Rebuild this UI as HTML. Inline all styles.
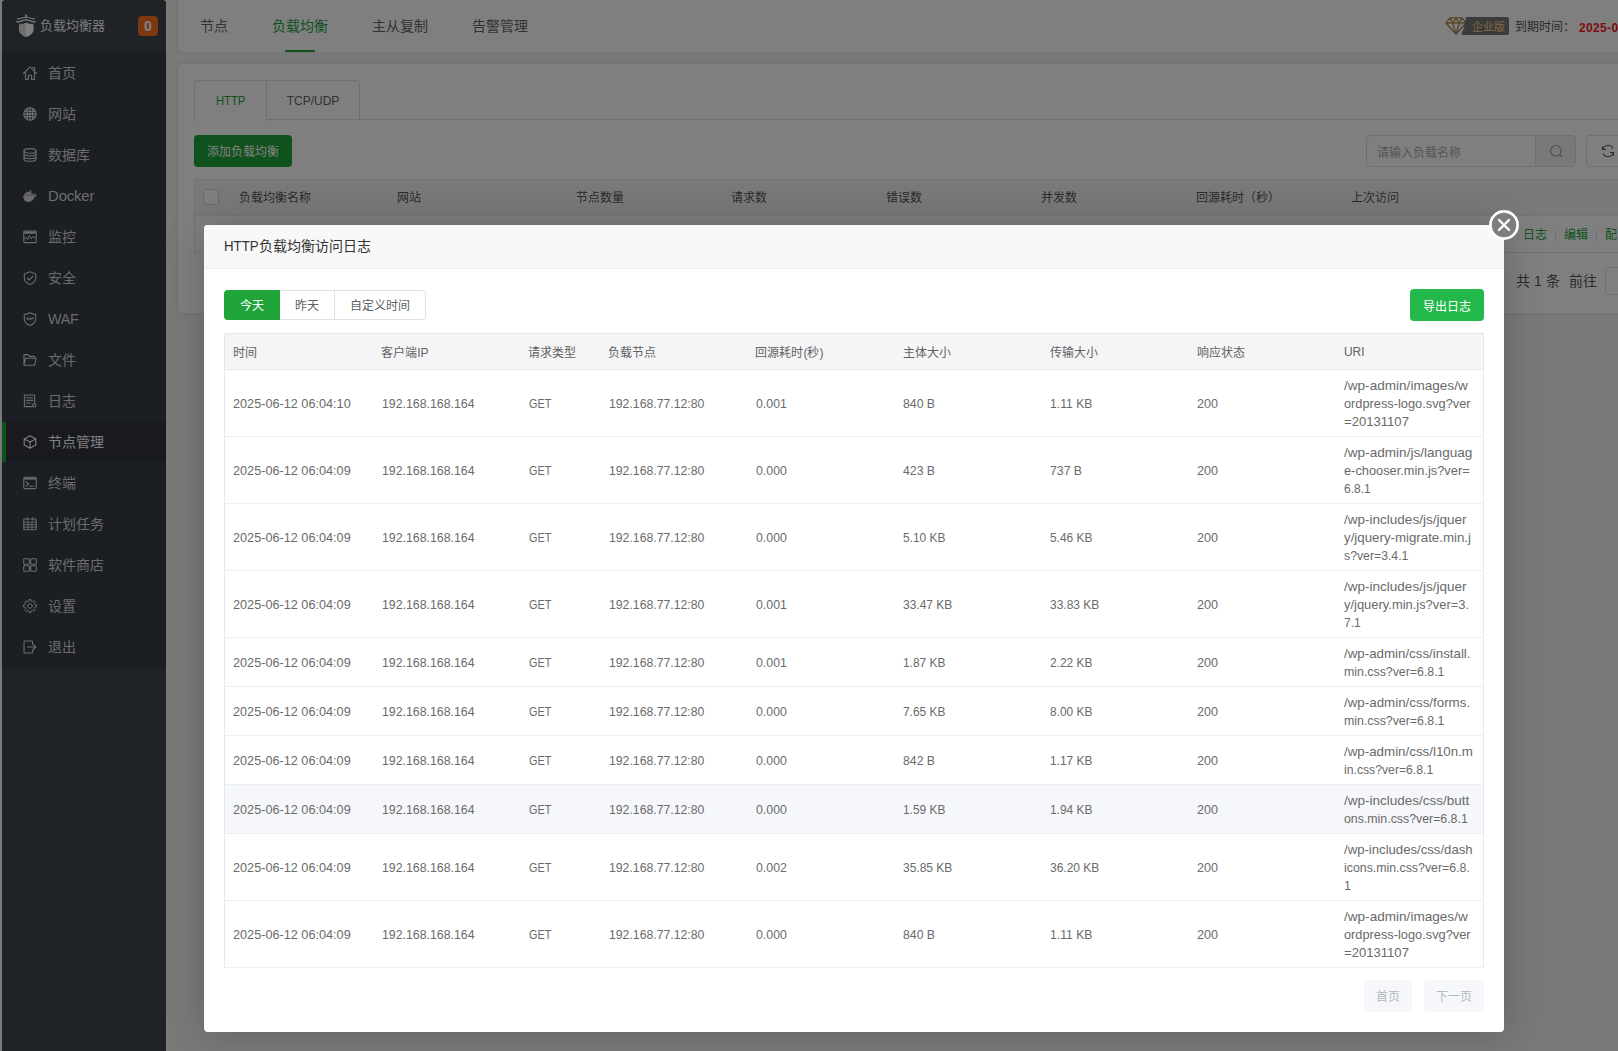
<!DOCTYPE html>
<html lang="zh-CN">
<head>
<meta charset="utf-8">
<title>HTTP负载均衡访问日志</title>
<style>
*{box-sizing:border-box;margin:0;padding:0}
html,body{width:1618px;height:1051px;overflow:hidden}
body{position:relative;background:#f2f2f2;font-family:"Liberation Sans",sans-serif;font-size:12px;color:#666}
.abs{position:absolute}
/* sidebar */
#side{position:absolute;left:2px;top:0;width:164px;height:1051px;background:#3e4650;border-radius:4px 4px 0 0;overflow:hidden}
#shead{position:absolute;left:0;top:0;width:164px;height:53px;background:#3e444c}
#smenu{position:absolute;left:0;top:53px;width:164px;height:614px;background:#363c46}
#logo{position:absolute;left:14px;top:14px;width:20px;height:23px}
#stitle{position:absolute;left:38px;top:16px;font-size:13px;line-height:20px;color:#f4f4f4;white-space:nowrap}
#sbadge{position:absolute;left:136px;top:16px;width:20px;height:20px;border-radius:4px;background:#fc7022;color:#fff;font-weight:bold;font-size:14px;line-height:20px;text-align:center}
.mi{position:absolute;left:0;width:164px;height:40px;color:#d6d6d6}
.mi.act{background:#30343e;border-left:4px solid #20a53a;color:#fff}
.mi .ic{position:absolute;left:21px;top:13px;width:14px;height:14px;fill:none;stroke:currentColor;stroke-width:1.1;stroke-linejoin:round;stroke-linecap:round;overflow:visible}
.mi.act .ic{left:17px}
.mi .mt{position:absolute;left:46px;top:10px;font-size:14px;line-height:20px;white-space:nowrap}
.mi.act .mt{left:42px}
.mi .mt.lat{font-size:15px;letter-spacing:-0.2px}
.mi .mt.waf{transform:scaleX(.95);transform-origin:0 50%}
/* top nav */
#topnav{position:absolute;left:178px;top:0;width:1460px;height:52px;background:#fff;border-radius:0 0 0 5px;box-shadow:0 0 4px rgba(0,0,0,.1)}
.nv{position:absolute;top:15px;font-size:14px;line-height:22px;color:#666;white-space:nowrap}
.nv.on{color:#20a53a}
#nvline{position:absolute;left:107px;top:50px;width:30px;height:2px;background:#20a53a}
/* panel */
#panel{position:absolute;left:178px;top:64px;width:1460px;height:249px;background:#fff;border-radius:5px;box-shadow:0 0 4px rgba(0,0,0,.1)}
.tab{position:absolute;top:16px;height:40px;border:1px solid #dcdfe6;border-bottom:none;font-size:12px;line-height:40px;text-align:center;color:#666;background:#fff}
#tabline{position:absolute;left:16px;top:55px;width:1460px;height:1px;background:#dcdfe6}
#addbtn{position:absolute;left:16px;top:71px;width:98px;height:32px;background:#20a53a;border-radius:4px;color:#fff;font-size:12px;line-height:34px;text-align:center}
#sinput{position:absolute;left:1188px;top:71px;width:210px;height:32px;border:1px solid #dcdfe6;border-radius:4px;background:#fff;overflow:hidden}
#sinput span{position:absolute;left:10px;top:0;line-height:34px;font-size:12px;color:#a8abb2}
#sbtn{position:absolute;left:168px;top:0;width:41px;height:30px;background:#f1f3f7;border-left:1px solid #dcdfe6}
#rbtn{position:absolute;left:1408px;top:71px;width:60px;height:32px;border:1px solid #dcdfe6;border-radius:4px;background:#fff}
#btable{position:absolute;left:16px;top:115px;width:1460px;height:74px;border:1px solid #e4e7ed;border-right:none}
#bthead{position:absolute;left:0;top:0;width:1460px;height:36px;background:#f3f3f3;border-bottom:1px solid #e4e7ed}
.bth{position:absolute;top:8px;font-size:12px;line-height:20px;color:#555;white-space:nowrap}
#bchk{position:absolute;left:8px;top:9px;width:16px;height:16px;border:1px solid #d4d7de;border-radius:2px;background:#fff}
.blink{position:absolute;top:45px;font-size:12px;line-height:20px;color:#20a53a;white-space:nowrap}
.bsep{position:absolute;top:51px;width:1px;height:10px;background:#dcdfe6}
/* overlay */
#shade{position:absolute;left:0;top:0;width:1618px;height:1051px;background:rgba(0,0,0,.5)}
/* modal */
#modal{position:absolute;left:204px;top:225px;width:1300px;height:807px;background:#fff;border-radius:4px;box-shadow:1px 1px 40px rgba(0,0,0,.2)}
#mtitle{position:absolute;left:0;top:0;width:1300px;height:44px;background:#f8f8f8;border-bottom:1px solid #eeeeee;border-radius:4px 4px 0 0;padding-left:20px;font-size:14px;line-height:42px;color:#333}
#mclose{position:absolute;left:1285px;top:-15px;width:30px;height:30px}
#bgroup{position:absolute;left:20px;top:65px;height:30px;width:202px;border:1px solid #dcdfe6;border-radius:4px;background:#fff}
.bg{position:absolute;top:-1px;height:30px;font-size:12px;line-height:32px;text-align:center;color:#606266}
#export{position:absolute;left:1206px;top:64px;width:74px;height:32px;border-radius:4px;background:#22b84a;color:#fff;font-size:12px;line-height:36px;text-align:center}
#mtab{position:absolute;left:20px;top:108px;width:1260px;border-collapse:collapse;table-layout:fixed;font-size:13px;color:#6a6a6a;border:1px solid #e4e7ed}
#mtab th{height:36px;background:#f5f5f5;font-weight:normal;font-size:12px;color:#606266;text-align:left;padding-left:8.6px;border-bottom:1px solid #e4e7ed}
#mtab td{padding:0 0 0 9px;line-height:18px;border-bottom:1px solid #ebeef5;white-space:nowrap;vertical-align:middle}
#mtab tr.hov td{background:#f5f7fa}
#mtab td:first-child{padding-left:7.6px}
#mtab th:first-child{padding-left:7.8px}
.s{display:inline-block;position:relative;top:1px;transform-origin:0 50%;vertical-align:middle}
.s.bl{display:block;width:max-content}
.pg{position:absolute;top:755px;height:32px;border-radius:4px;background:#f5f7fa;color:#b4b8bf;font-size:12px;line-height:34px;text-align:center}
</style>
</head>
<body>
<div id="side">
  <div id="shead">
    <svg id="logo" viewBox="0 0 20 23"><rect x="9.2" y="0.6" width="1.7" height="2.8" fill="#f2f2f2"/><path d="M1.2 4.2 L2.4 5 L10 3 L17.6 5 L18.8 4.2" fill="none" stroke="#f4f4f4" stroke-width="1.2" stroke-linejoin="round"/><path d="M0.2 7.2 L1.6 8.2 L10 5.6 L18.4 8.2 L19.8 7.2" fill="none" stroke="#f4f4f4" stroke-width="1.3" stroke-linejoin="round"/><path d="M2.9 9.4 L4.4 10.4 L5.8 9.2 L7.2 10.2 L8.6 9 L10 8.8 V23 C5.6 21.2 2.9 18.8 2.9 15.4 Z" fill="#dedede"/><path d="M17.6 9.4 L16.1 10.4 L14.7 9.2 L13.3 10.2 L11.9 9 L10 8.8 V23 C14.8 21.2 17.6 18.8 17.6 15.4 Z" fill="#ffffff"/></svg>
    <div id="stitle">负载均衡器</div>
    <div id="sbadge">0</div>
  </div>
  <div id="smenu"></div>
<div class="mi" style="top:53px"><svg class="ic" viewBox="0 0 14 14"><path d="M0.5 7.5 L7 0.8 L13.5 7.5 M2.5 6 V13.4 H5.4 V9.2 H8.6 V13.4 H11.5 V6 M9.6 1.5 H11.7 V4.6"/></svg><span class="mt">首页</span></div>
<div class="mi" style="top:94px"><svg class="ic" viewBox="0 0 14 14"><circle cx="7" cy="7" r="6.2" stroke-width="1.2"/><path d="M4.3 1.6 V12.4 M9.7 1.6 V12.4 M7 0.8 V13.2 M1.6 4.3 H12.4 M1.6 9.7 H12.4 M0.8 7 H13.2" stroke-width="1.3" stroke-linecap="butt"/></svg><span class="mt">网站</span></div>
<div class="mi" style="top:135px"><svg class="ic" viewBox="0 0 14 14"><ellipse cx="7" cy="2.9" rx="6" ry="2.3"/><path d="M1 2.9 V11 C1 12.4 3.6 13.3 7 13.3 S13 12.4 13 11 V2.9 M1 5.6 C1 7 3.6 7.9 7 7.9 S13 7 13 5.6 M1 8.3 C1 9.7 3.6 10.6 7 10.6 S13 9.7 13 8.3"/></svg><span class="mt">数据库</span></div>
<div class="mi" style="top:176px"><svg class="ic" viewBox="0 0 14 14"><path fill="currentColor" stroke="none" d="M0.2 6.6 H10.7 C10.9 5.6 11.2 4.8 11.8 4.0 C12.4 4.6 12.6 5.3 12.5 6.0 C13 5.8 13.5 5.9 13.9 6.2 C13.4 7.2 12.6 7.6 11.8 7.6 C10.8 10.8 8.6 13 5.4 13 C2 13 0.2 10.6 0.2 6.6 Z M1.3 4.6 h1.6 v1.6 h-1.6z M3.1 4.6 h1.6 v1.6 h-1.6z M4.9 4.6 h1.6 v1.6 h-1.6z M6.7 4.6 h1.6 v1.6 h-1.6z M8.5 4.6 h1.6 v1.6 h-1.6z M3.1 2.8 h1.6 v1.6 h-1.6z M4.9 2.8 h1.6 v1.6 h-1.6z M6.7 2.8 h1.6 v1.6 h-1.6z M6.7 1 h1.6 v1.6 h-1.6z"/></svg><span class="mt lat">Docker</span></div>
<div class="mi" style="top:217px"><svg class="ic" viewBox="0 0 14 14"><rect x="0.8" y="1" width="12.4" height="11.6" rx="0.8"/><path d="M1.3 2.6 H12.7" stroke-width="2.4" stroke-linecap="butt"/><path d="M1 9 L3.4 7.2 L4.8 9.6 L6.4 5.4 L8.2 9 L9.6 6.4 L11 8 L13 6.8" stroke-width="0.9"/></svg><span class="mt">监控</span></div>
<div class="mi" style="top:258px"><svg class="ic" viewBox="0 0 14 14"><path d="M7 0.8 L12.7 2.9 V7 C12.7 10 10.4 12.2 7 13.4 C3.6 12.2 1.3 10 1.3 7 V2.9 Z"/><path d="M4.3 7 L6.3 9 L9.9 5.2"/></svg><span class="mt">安全</span></div>
<div class="mi" style="top:299px"><svg class="ic" viewBox="0 0 14 14"><path d="M7 0.8 C8.8 1.9 10.6 2.3 12.7 2.3 V7 C12.7 10 10.4 12.2 7 13.4 C3.6 12.2 1.3 10 1.3 7 V2.3 C3.4 2.3 5.2 1.9 7 0.8 Z"/><path d="M3.4 5.6 L4 7.8 L4.6 6.2 L5.2 7.8 L5.8 5.6 M6.6 7.8 L7.3 5.6 L8 7.8 M6.8 7.1 H7.8 M8.9 7.8 V5.6 H10.4 M8.9 6.7 H10.1" stroke-width="0.7"/></svg><span class="mt lat waf">WAF</span></div>
<div class="mi" style="top:340px"><svg class="ic" viewBox="0 0 14 14"><path d="M1 12.2 V1.6 H5 L6.4 3.4 H11.6 V5.2 M1 12.2 L2.6 5.2 H13.2 L11.6 12.2 Z"/></svg><span class="mt">文件</span></div>
<div class="mi" style="top:381px"><svg class="ic" viewBox="0 0 14 14"><path d="M9.2 12.6 H1.4 V1 H11.6 V8.4"/><path d="M3.2 3.8 H9.8 M3.2 6.4 H9.8 M3.2 9 H7.4"/><circle cx="11.3" cy="11.3" r="1.7"/></svg><span class="mt">日志</span></div>
<div class="mi act" style="top:422px"><svg class="ic" viewBox="0 0 14 14"><path d="M7 0.8 L12.8 3.9 V10.1 L7 13.2 L1.2 10.1 V3.9 Z M1.2 3.9 L7 7 L12.8 3.9 M7 7 V13.2"/></svg><span class="mt">节点管理</span></div>
<div class="mi" style="top:463px"><svg class="ic" viewBox="0 0 14 14"><rect x="0.8" y="1.2" width="12.4" height="11.4" rx="0.8"/><path d="M1.3 2.6 H12.7" stroke-width="2" stroke-linecap="butt"/><path d="M3.2 5.8 L5.8 7.9 L3.2 10 M6.8 10.2 H10.4"/></svg><span class="mt">终端</span></div>
<div class="mi" style="top:504px"><svg class="ic" viewBox="0 0 14 14"><rect x="0.8" y="2" width="12.4" height="10.8" rx="0.8"/><path d="M4.4 0.6 V3.4 M9.6 0.6 V3.4 M1 5.2 H13 M1 7.7 H13 M1 10.2 H13 M5 5.2 V12.6 M9 5.2 V12.6" stroke-width="0.9"/></svg><span class="mt">计划任务</span></div>
<div class="mi" style="top:545px"><svg class="ic" viewBox="0 0 14 14"><rect x="0.7" y="0.7" width="5.6" height="5.6" rx="0.8"/><rect x="7.7" y="0.7" width="5.6" height="5.6" rx="0.8"/><rect x="0.7" y="7.7" width="5.6" height="5.6" rx="0.8"/><rect x="7.7" y="7.7" width="5.6" height="5.6" rx="0.8"/></svg><span class="mt">软件商店</span></div>
<div class="mi" style="top:586px"><svg class="ic" viewBox="0 0 14 14"><path d="M5.79 2.05 L5.96 0.58 L8.04 0.58 L8.21 2.05 L9.65 2.64 L10.81 1.73 L12.27 3.19 L11.36 4.35 L11.95 5.79 L13.42 5.96 L13.42 8.04 L11.95 8.21 L11.36 9.65 L12.27 10.81 L10.81 12.27 L9.65 11.36 L8.21 11.95 L8.04 13.42 L5.96 13.42 L5.79 11.95 L4.35 11.36 L3.19 12.27 L1.73 10.81 L2.64 9.65 L2.05 8.21 L0.58 8.04 L0.58 5.96 L2.05 5.79 L2.64 4.35 L1.73 3.19 L3.19 1.73 L4.35 2.64 Z" stroke-width="1"/><circle cx="7" cy="7" r="2.3" stroke-width="1"/></svg><span class="mt">设置</span></div>
<div class="mi" style="top:627px"><svg class="ic" viewBox="0 0 14 14"><path d="M9.6 4.2 V1.8 C9.6 1.3 9.3 1 8.8 1 H1.8 C1.3 1 1 1.3 1 1.8 V12.2 C1 12.7 1.3 13 1.8 13 H8.8 C9.3 13 9.6 12.7 9.6 12.2 V9.8"/><path d="M4.6 7 H12.6 M10.2 4.4 L12.8 7 L10.2 9.6"/></svg><span class="mt">退出</span></div>

</div>

<div id="topnav">
  <div class="nv" style="left:22px">节点</div>
  <div class="nv on" style="left:94px">负载均衡</div>
  <div class="nv" style="left:194px">主从复制</div>
  <div class="nv" style="left:294px">告警管理</div>
  <div id="nvline"></div>
  <svg class="abs" style="left:1267px;top:17px;width:22px;height:18px" viewBox="0 0 22 18" fill="none" stroke="#b08c52" stroke-width="1.35" stroke-linejoin="round"><path d="M5 0.8 H17 L21 6 L11 17.2 L1 6 Z M1 6 H21 M7.6 6 L11 17.2 L14.4 6 M5 0.8 L7.6 6 L11 0.8 L14.4 6 L17 0.8"/></svg>
  <div class="abs" style="left:1283px;top:17px;width:48px;height:18px;background:#767676;border-radius:2px;clip-path:polygon(5px 0,100% 0,100% 100%,0 100%,3px 60%)"></div>
  <div class="abs" style="left:1294px;top:18px;font-size:11px;line-height:18px;color:#ffd48a;white-space:nowrap">企业版</div>
  <div class="abs" style="left:1337px;top:16px;font-size:12px;line-height:22px;color:#555;white-space:nowrap">到期时间：</div>
  <div class="abs" style="left:1401px;top:17px;font-size:12px;line-height:22px;color:#fa1919;font-weight:bold;white-space:nowrap;letter-spacing:0.35px">2025-06-30</div>
</div>

<div id="panel">
  <div id="tabline"></div>
  <div class="tab" style="left:16px;width:73px;color:#20a53a;border-radius:4px 0 0 0;height:41px"><span style="display:inline-block;transform:scaleX(.94)">HTTP</span></div>
  <div class="tab" style="left:88px;width:94px;border-radius:0 4px 0 0;height:39px">TCP/UDP</div>
  <div id="addbtn">添加负载均衡</div>
  <div id="sinput"><span>请输入负载名称</span><div id="sbtn"><svg class="abs" style="left:13px;top:8px;width:15px;height:15px" viewBox="0 0 15 15" fill="none" stroke="#9a9da4" stroke-width="1.1" stroke-linecap="round"><circle cx="6.8" cy="6.8" r="5.3"/><path d="M10.7 10.7 L12.7 12.7"/></svg></div></div>
  <div id="rbtn"><svg class="abs" style="left:13.5px;top:8px;width:14px;height:14px;transform:scaleX(-1)" viewBox="0 0 15 15" fill="none" stroke="#5a5a5a" stroke-width="1.1" stroke-linecap="round" stroke-linejoin="round"><path d="M12.9 5.6 A5.8 5.8 0 0 0 2.3 4.4 M2.1 9.4 A5.8 5.8 0 0 0 12.7 10.6"/><path d="M13.3 2.6 V5.8 H10.1 M1.7 12.4 V9.2 H4.9"/></svg></div>
  <div id="btable">
    <div id="bthead">
      <div id="bchk"></div>
      <div class="bth" style="left:44px">负载均衡名称</div>
      <div class="bth" style="left:202px">网站</div>
      <div class="bth" style="left:381px">节点数量</div>
      <div class="bth" style="left:536px">请求数</div>
      <div class="bth" style="left:691px">错误数</div>
      <div class="bth" style="left:846px">并发数</div>
      <div class="bth" style="left:1001px">回源耗时（秒）</div>
      <div class="bth" style="left:1156px">上次访问</div>
    </div>
    <div class="blink" style="left:1328px">日志</div><div class="bsep" style="left:1360px"></div>
    <div class="blink" style="left:1369px">编辑</div><div class="bsep" style="left:1401px"></div>
    <div class="blink" style="left:1410px">配置</div>
  </div>
  <div class="abs" style="left:1338px;top:206px;font-size:14px;line-height:22px;color:#555;white-space:nowrap">共 1 条</div>
  <div class="abs" style="left:1391px;top:206px;font-size:14px;line-height:22px;color:#555;white-space:nowrap">前往</div>
  <div class="abs" style="left:1427px;top:203px;width:50px;height:28px;border:1px solid #dcdfe6;border-radius:4px;background:#fff"></div>
</div>

<div id="shade"></div>

<div id="modal">
  <div id="mtitle"><span style="display:inline-block;transform:scaleX(.95);transform-origin:0 50%;margin-right:-2px">HTTP</span>负载均衡访问日志</div>
  <div id="mclose"><svg class="abs" style="left:0;top:0;width:30px;height:30px" viewBox="0 0 30 30"><circle cx="15" cy="15" r="13.6" fill="#7e7e7e" stroke="#fff" stroke-width="2.7"/><path d="M10 10 L20 20 M20 10 L10 20" stroke="#fff" stroke-width="2.4" stroke-linecap="round" fill="none"/></svg></div>
  <div id="bgroup">
    <div class="bg" style="left:-1px;width:56px;background:#20a53a;color:#fff;border-radius:4px 0 0 4px">今天</div>
    <div class="bg" style="left:55px;width:55px;border-right:1px solid #dcdfe6">昨天</div>
    <div class="bg" style="left:110px;width:90px">自定义时间</div>
  </div>
  <div id="export">导出日志</div>
  <table id="mtab">
    <colgroup><col style="width:148px"><col style="width:147px"><col style="width:80px"><col style="width:147px"><col style="width:147px"><col style="width:147px"><col style="width:147px"><col style="width:147px"><col style="width:148px"></colgroup>
    <thead><tr><th>时间</th><th>客户端IP</th><th>请求类型</th><th>负载节点</th><th>回源耗时(秒)</th><th>主体大小</th><th>传输大小</th><th>响应状态</th><th>URI</th></tr></thead>
    <tbody>
<tr style="height:67px"><td><span class="s" style="transform:scaleX(0.975)">2025-06-12 06:04:10</span></td><td><span class="s" style="transform:scaleX(0.948)">192.168.168.164</span></td><td><span class="s" style="transform:scaleX(0.834)">GET</span></td><td><span class="s" style="transform:scaleX(0.942)">192.168.77.12:80</span></td><td><span class="s" style="transform:scaleX(0.948)">0.001</span></td><td><span class="s" style="transform:scaleX(0.943)">840 B</span></td><td><span class="s" style="transform:scaleX(0.936)">1.11 KB</span></td><td><span class="s" style="transform:scaleX(0.969)">200</span></td><td><span class="s bl" style="transform:scaleX(1.044)">/wp-admin/images/w</span><span class="s bl" style="transform:scaleX(0.984)">ordpress-logo.svg?ver</span><span class="s bl" style="transform:scaleX(1.007)">=20131107</span></td></tr>
<tr style="height:67px"><td><span class="s" style="transform:scaleX(0.975)">2025-06-12 06:04:09</span></td><td><span class="s" style="transform:scaleX(0.948)">192.168.168.164</span></td><td><span class="s" style="transform:scaleX(0.834)">GET</span></td><td><span class="s" style="transform:scaleX(0.942)">192.168.77.12:80</span></td><td><span class="s" style="transform:scaleX(0.948)">0.000</span></td><td><span class="s" style="transform:scaleX(0.943)">423 B</span></td><td><span class="s" style="transform:scaleX(0.943)">737 B</span></td><td><span class="s" style="transform:scaleX(0.969)">200</span></td><td><span class="s bl" style="transform:scaleX(1.045)">/wp-admin/js/languag</span><span class="s bl" style="transform:scaleX(0.985)">e-chooser.min.js?ver=</span><span class="s bl" style="transform:scaleX(0.922)">6.8.1</span></td></tr>
<tr style="height:67px"><td><span class="s" style="transform:scaleX(0.975)">2025-06-12 06:04:09</span></td><td><span class="s" style="transform:scaleX(0.948)">192.168.168.164</span></td><td><span class="s" style="transform:scaleX(0.834)">GET</span></td><td><span class="s" style="transform:scaleX(0.942)">192.168.77.12:80</span></td><td><span class="s" style="transform:scaleX(0.948)">0.000</span></td><td><span class="s" style="transform:scaleX(0.916)">5.10 KB</span></td><td><span class="s" style="transform:scaleX(0.916)">5.46 KB</span></td><td><span class="s" style="transform:scaleX(0.969)">200</span></td><td><span class="s bl" style="transform:scaleX(1.040)">/wp-includes/js/jquer</span><span class="s bl" style="transform:scaleX(1.022)">y/jquery-migrate.min.j</span><span class="s bl" style="transform:scaleX(0.943)">s?ver=3.4.1</span></td></tr>
<tr style="height:67px"><td><span class="s" style="transform:scaleX(0.975)">2025-06-12 06:04:09</span></td><td><span class="s" style="transform:scaleX(0.948)">192.168.168.164</span></td><td><span class="s" style="transform:scaleX(0.834)">GET</span></td><td><span class="s" style="transform:scaleX(0.942)">192.168.77.12:80</span></td><td><span class="s" style="transform:scaleX(0.948)">0.001</span></td><td><span class="s" style="transform:scaleX(0.923)">33.47 KB</span></td><td><span class="s" style="transform:scaleX(0.923)">33.83 KB</span></td><td><span class="s" style="transform:scaleX(0.969)">200</span></td><td><span class="s bl" style="transform:scaleX(1.040)">/wp-includes/js/jquer</span><span class="s bl" style="transform:scaleX(0.994)">y/jquery.min.js?ver=3.</span><span class="s bl" style="transform:scaleX(0.931)">7.1</span></td></tr>
<tr style="height:49px"><td><span class="s" style="transform:scaleX(0.975)">2025-06-12 06:04:09</span></td><td><span class="s" style="transform:scaleX(0.948)">192.168.168.164</span></td><td><span class="s" style="transform:scaleX(0.834)">GET</span></td><td><span class="s" style="transform:scaleX(0.942)">192.168.77.12:80</span></td><td><span class="s" style="transform:scaleX(0.948)">0.001</span></td><td><span class="s" style="transform:scaleX(0.916)">1.87 KB</span></td><td><span class="s" style="transform:scaleX(0.916)">2.22 KB</span></td><td><span class="s" style="transform:scaleX(0.969)">200</span></td><td><span class="s bl" style="transform:scaleX(1.024)">/wp-admin/css/install.</span><span class="s bl" style="transform:scaleX(0.949)">min.css?ver=6.8.1</span></td></tr>
<tr style="height:49px"><td><span class="s" style="transform:scaleX(0.975)">2025-06-12 06:04:09</span></td><td><span class="s" style="transform:scaleX(0.948)">192.168.168.164</span></td><td><span class="s" style="transform:scaleX(0.834)">GET</span></td><td><span class="s" style="transform:scaleX(0.942)">192.168.77.12:80</span></td><td><span class="s" style="transform:scaleX(0.948)">0.000</span></td><td><span class="s" style="transform:scaleX(0.916)">7.65 KB</span></td><td><span class="s" style="transform:scaleX(0.916)">8.00 KB</span></td><td><span class="s" style="transform:scaleX(0.969)">200</span></td><td><span class="s bl" style="transform:scaleX(1.027)">/wp-admin/css/forms.</span><span class="s bl" style="transform:scaleX(0.949)">min.css?ver=6.8.1</span></td></tr>
<tr style="height:49px"><td><span class="s" style="transform:scaleX(0.975)">2025-06-12 06:04:09</span></td><td><span class="s" style="transform:scaleX(0.948)">192.168.168.164</span></td><td><span class="s" style="transform:scaleX(0.834)">GET</span></td><td><span class="s" style="transform:scaleX(0.942)">192.168.77.12:80</span></td><td><span class="s" style="transform:scaleX(0.948)">0.000</span></td><td><span class="s" style="transform:scaleX(0.943)">842 B</span></td><td><span class="s" style="transform:scaleX(0.916)">1.17 KB</span></td><td><span class="s" style="transform:scaleX(0.969)">200</span></td><td><span class="s bl" style="transform:scaleX(1.026)">/wp-admin/css/l10n.m</span><span class="s bl" style="transform:scaleX(0.939)">in.css?ver=6.8.1</span></td></tr>
<tr class="hov" style="height:49px"><td><span class="s" style="transform:scaleX(0.975)">2025-06-12 06:04:09</span></td><td><span class="s" style="transform:scaleX(0.948)">192.168.168.164</span></td><td><span class="s" style="transform:scaleX(0.834)">GET</span></td><td><span class="s" style="transform:scaleX(0.942)">192.168.77.12:80</span></td><td><span class="s" style="transform:scaleX(0.948)">0.000</span></td><td><span class="s" style="transform:scaleX(0.916)">1.59 KB</span></td><td><span class="s" style="transform:scaleX(0.916)">1.94 KB</span></td><td><span class="s" style="transform:scaleX(0.969)">200</span></td><td><span class="s bl" style="transform:scaleX(1.038)">/wp-includes/css/butt</span><span class="s bl" style="transform:scaleX(0.949)">ons.min.css?ver=6.8.1</span></td></tr>
<tr style="height:67px"><td><span class="s" style="transform:scaleX(0.975)">2025-06-12 06:04:09</span></td><td><span class="s" style="transform:scaleX(0.948)">192.168.168.164</span></td><td><span class="s" style="transform:scaleX(0.834)">GET</span></td><td><span class="s" style="transform:scaleX(0.942)">192.168.77.12:80</span></td><td><span class="s" style="transform:scaleX(0.948)">0.002</span></td><td><span class="s" style="transform:scaleX(0.923)">35.85 KB</span></td><td><span class="s" style="transform:scaleX(0.923)">36.20 KB</span></td><td><span class="s" style="transform:scaleX(0.969)">200</span></td><td><span class="s bl" style="transform:scaleX(1.011)">/wp-includes/css/dash</span><span class="s bl" style="transform:scaleX(0.949)">icons.min.css?ver=6.8.</span><span class="s bl" style="transform:scaleX(0.969)">1</span></td></tr>
<tr style="height:67px"><td><span class="s" style="transform:scaleX(0.975)">2025-06-12 06:04:09</span></td><td><span class="s" style="transform:scaleX(0.948)">192.168.168.164</span></td><td><span class="s" style="transform:scaleX(0.834)">GET</span></td><td><span class="s" style="transform:scaleX(0.942)">192.168.77.12:80</span></td><td><span class="s" style="transform:scaleX(0.948)">0.000</span></td><td><span class="s" style="transform:scaleX(0.943)">840 B</span></td><td><span class="s" style="transform:scaleX(0.936)">1.11 KB</span></td><td><span class="s" style="transform:scaleX(0.969)">200</span></td><td><span class="s bl" style="transform:scaleX(1.044)">/wp-admin/images/w</span><span class="s bl" style="transform:scaleX(0.984)">ordpress-logo.svg?ver</span><span class="s bl" style="transform:scaleX(1.007)">=20131107</span></td></tr>
    </tbody>
  </table>
  <div class="pg" style="left:1160px;width:48px">首页</div>
  <div class="pg" style="left:1220px;width:60px">下一页</div>
</div>
</body>
</html>
